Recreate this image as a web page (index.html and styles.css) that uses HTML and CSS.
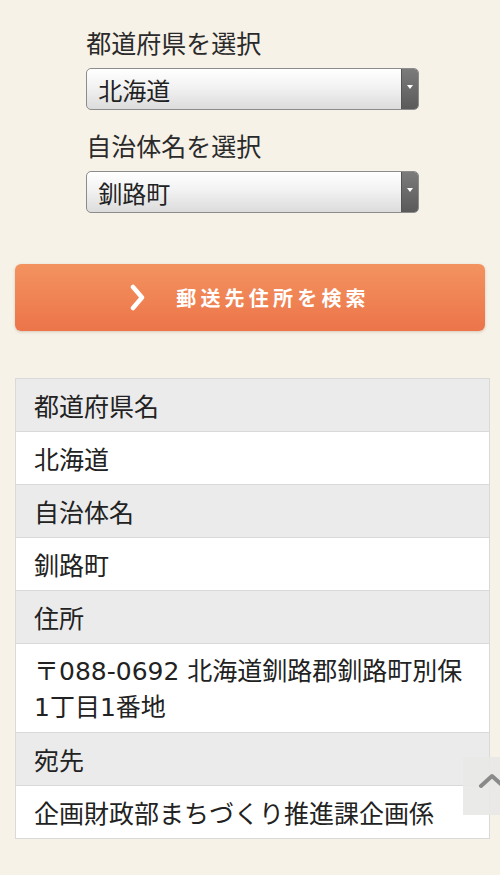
FILE: index.html
```html
<!DOCTYPE html>
<html lang="ja">
<head>
  <meta charset="UTF-8">
  <meta name="viewport" content="width=device-width, initial-scale=1.0">
  <title>郵送先住所の検索</title>
  <link rel="stylesheet" href="styles.css">
</head>
<body>
  <div class="container">
    <form class="search-form">
      <label for="pref">都道府県を選択</label>
      <div class="select-box">
        <select id="pref">
          <option>北海道</option>
        </select>
        <span class="select-arrow"></span>
      </div>

      <label for="city">自治体名を選択</label>
      <div class="select-box">
        <select id="city">
          <option>釧路町</option>
        </select>
        <span class="select-arrow"></span>
      </div>
    </form>

    <button type="button" class="search-btn">
      <svg class="chevron" width="16" height="27" viewBox="0 0 16 27">
        <path d="M3 3 L12 13.5 L3 24" fill="none" stroke="#fff" stroke-width="4.5" stroke-linecap="round" stroke-linejoin="round"/>
      </svg>
      <span>郵送先住所を検索</span>
    </button>

    <table class="result">
      <tr><th>都道府県名</th></tr>
      <tr><td>北海道</td></tr>
      <tr><th>自治体名</th></tr>
      <tr><td>釧路町</td></tr>
      <tr><th>住所</th></tr>
      <tr><td class="address">〒088-0692 北海道釧路郡釧路町別保1丁目1番地</td></tr>
      <tr><th>宛先</th></tr>
      <tr><td>企画財政部まちづくり推進課企画係</td></tr>
    </table>
  </div>

  <a href="#" class="page-top">
    <svg width="30" height="20" viewBox="0 0 30 20">
      <path d="M4 15 L15 5 L26 15" fill="none" stroke="#8a8a8a" stroke-width="4" stroke-linecap="round" stroke-linejoin="round"/>
    </svg>
  </a>
</body>
</html>
```

FILE: styles.css
```css
body {
  font-family: "Noto Sans CJK JP", "Noto Sans", sans-serif;
  background-color: #f6f2e8;
  color: #222;
  margin: 0;
  padding: 0;
}

.container {
  padding: 24px 10px 36px 15px;
}

.search-form {
  width: 70%;
  margin: 0 auto;
}

.search-form label {
  display: block;
  font-size: 25px;
  line-height: 36px;
  color: #2a2a2a;
}

.select-box {
  display: flex;
  height: 40px;
  margin: 8px 0 17px;
  border: 1px solid #8c8c8c;
  border-radius: 5px;
  overflow: hidden;
  background: linear-gradient(#ffffff, #f2f2f2 45%, #dcdcdc);
}

.select-box select {
  flex: 1;
  -webkit-appearance: none;
  appearance: none;
  border: none;
  background: transparent;
  font-family: inherit;
  font-size: 24px;
  color: #222;
  padding: 0 11px;
  outline: none;
}

.select-arrow {
  width: 16px;
  border-left: 1px solid #555;
  background: linear-gradient(#7b7b7b, #5a5a5a);
  display: flex;
  align-items: center;
  justify-content: center;
}

.select-arrow::after {
  content: "";
  border-left: 3px solid transparent;
  border-right: 3px solid transparent;
  border-top: 4px solid #fff;
  margin-bottom: 4px;
}

.search-form .select-box:last-child {
  margin-bottom: 0;
}

.search-btn {
  display: flex;
  align-items: center;
  justify-content: center;
  gap: 30px;
  width: 470px;
  height: 67px;
  margin-top: 51px;
  padding: 0;
  border: none;
  border-radius: 6px;
  background: linear-gradient(#f3935f, #ec744a);
  box-shadow: 0 1px 3px rgba(120, 70, 30, 0.25);
  color: #fff;
  font-family: inherit;
  font-size: 20px;
  font-weight: bold;
  letter-spacing: 4.2px;
  cursor: pointer;
}

.result {
  width: 100%;
  margin-top: 47px;
  border-collapse: collapse;
  border: 1px solid #d9d9d9;
  font-size: 25px;
  line-height: 36px;
}

.result th,
.result td {
  text-align: left;
  font-weight: normal;
  padding: 8px 18px;
  border-top: 1px solid #d9d9d9;
}

.result th {
  background-color: #ebebeb;
}

.result td {
  background-color: #fff;
}

/* wider latin digits, as in the postal code */
.result td.address {
  font-family: "DejaVu Sans", "Noto Sans CJK JP", sans-serif;
  padding-top: 10px;
  padding-bottom: 6px;
}

.page-top {
  position: fixed;
  right: 0;
  top: 757px;
  width: 37px;
  height: 58px;
  background-color: rgba(232, 232, 230, 0.92);
  display: flex;
  align-items: center;
  overflow: hidden;
}

.page-top svg {
  margin-left: 14px;
  margin-top: -10px;
  flex-shrink: 0;
}
```
